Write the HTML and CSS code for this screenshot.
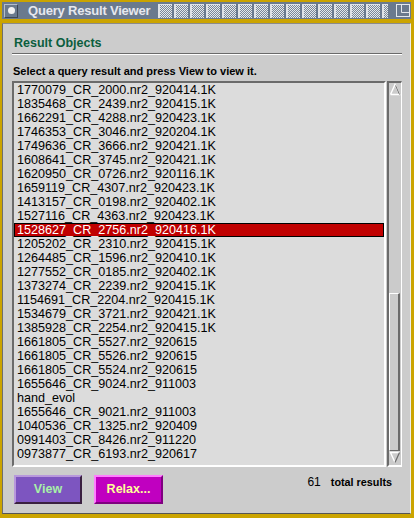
FILE: index.html
```html
<!DOCTYPE html>
<html>
<head>
<meta charset="utf-8">
<link rel="stylesheet" href="styles.css">
</head>
<body>
<div class="window">
  <div class="titlebar">
    <span class="ticon"><span class="dot"></span></span>
    <span class="ttext">Query Result Viewer</span>
    <svg class="stipple" width="230" height="14" viewBox="0 0 230 14">
      <defs>
        <pattern id="ck" width="2" height="2" patternUnits="userSpaceOnUse">
          <rect width="2" height="2" fill="#7a8898"/>
          <rect width="1" height="1" fill="#e4e8ec"/>
          <rect x="1" y="1" width="1" height="1" fill="#e4e8ec"/>
        </pattern>
        <pattern id="blk" width="16" height="14" patternUnits="userSpaceOnUse">
          <rect width="16" height="14" fill="#6a7a8e"/>
          <rect x="0" y="0" width="2" height="14" fill="#dfe3e8"/>
          <rect x="0" y="0" width="14" height="1" fill="#dfe3e8"/>
          <rect x="2" y="1" width="12" height="13" fill="url(#ck)"/>
        </pattern>
      </defs>
      <rect width="230" height="14" fill="url(#blk)"/>
    </svg>
    <svg class="maxi" width="14" height="13" viewBox="0 0 14 13">
      <rect x="0.5" y="0.5" width="13" height="12" fill="none" stroke="#e4e8ec"/>
      <path d="M5.5 0.5 V8.5 H13.5" fill="none" stroke="#e4e8ec"/>
    </svg>
  </div>
  <div class="content">
    <div class="heading">Result Objects</div>
    <div class="rule"></div>
    <div class="prompt">Select a query result and press View to view it.</div>
    <div class="listwrap">
      <div class="list">
        <div class="row">1770079_CR_2000.nr2_920414.1K</div>
        <div class="row">1835468_CR_2439.nr2_920415.1K</div>
        <div class="row">1662291_CR_4288.nr2_920423.1K</div>
        <div class="row">1746353_CR_3046.nr2_920204.1K</div>
        <div class="row">1749636_CR_3666.nr2_920421.1K</div>
        <div class="row">1608641_CR_3745.nr2_920421.1K</div>
        <div class="row">1620950_CR_0726.nr2_920116.1K</div>
        <div class="row">1659119_CR_4307.nr2_920423.1K</div>
        <div class="row">1413157_CR_0198.nr2_920402.1K</div>
        <div class="row">1527116_CR_4363.nr2_920423.1K</div>
        <div class="row selected">1528627_CR_2756.nr2_920416.1K</div>
        <div class="row">1205202_CR_2310.nr2_920415.1K</div>
        <div class="row">1264485_CR_1596.nr2_920410.1K</div>
        <div class="row">1277552_CR_0185.nr2_920402.1K</div>
        <div class="row">1373274_CR_2239.nr2_920415.1K</div>
        <div class="row">1154691_CR_2204.nr2_920415.1K</div>
        <div class="row">1534679_CR_3721.nr2_920421.1K</div>
        <div class="row">1385928_CR_2254.nr2_920415.1K</div>
        <div class="row">1661805_CR_5527.nr2_920615</div>
        <div class="row">1661805_CR_5526.nr2_920615</div>
        <div class="row">1661805_CR_5524.nr2_920615</div>
        <div class="row">1655646_CR_9024.nr2_911003</div>
        <div class="row">hand_evol</div>
        <div class="row">1655646_CR_9021.nr2_911003</div>
        <div class="row">1040536_CR_1325.nr2_920409</div>
        <div class="row">0991403_CR_8426.nr2_911220</div>
        <div class="row">0973877_CR_6193.nr2_920617</div>
      </div>
      <div class="scrollbar">
        <svg class="arrow" width="12" height="13" viewBox="0 0 12 13">
          <path d="M6 1 L10.5 11 H1.5 Z" fill="#cbcbcb"/>
          <path d="M1.5 11.5 L6 1.5 L10.5 11.5 H1.5" stroke="#ffffff" stroke-width="1.4" fill="none"/>
          <path d="M6.5 2.5 L10.5 11.5" stroke="#6b6b6b" stroke-width="1" fill="none"/>
        </svg>
        <div class="trough">
          <div class="thumb"></div>
        </div>
        <svg class="arrow" width="12" height="13" viewBox="0 0 12 13">
          <path d="M1.5 1.5 H10.5 L6 11.5 Z" fill="#cbcbcb"/>
          <path d="M10.5 1.5 H1.5 L6 11.5" stroke="#ffffff" stroke-width="1.4" fill="none"/>
          <path d="M6 11.5 L10.5 1.5" stroke="#6b6b6b" stroke-width="1.2" fill="none"/>
        </svg>
      </div>
    </div>
    <div class="footer">
      <button class="btn btn-view">View</button>
      <button class="btn btn-relax">Relax...</button>
      <div class="count"><span class="num">61</span><span class="lbl">total results</span></div>
    </div>
  </div>
</div>
</body>
</html>
```

FILE: styles.css
```css
html, body {
  margin: 0;
  padding: 0;
  background: #cba400;
}
body {
  width: 414px;
  height: 518px;
  overflow: hidden;
  font-family: "Liberation Sans", Arial, sans-serif;
}
.window {
  box-sizing: border-box;
  width: 414px;
  height: 518px;
  padding: 2px 3px 4px 2px;
  display: flex;
  flex-direction: column;
  background: #cba400;
}
.titlebar {
  height: 17px;
  flex: none;
  background: #6a7a8e;
  display: flex;
  align-items: center;
  margin-bottom: 4px;
}
.ticon {
  box-sizing: border-box;
  width: 14px;
  height: 14px;
  margin-left: 2px;
  border: 1px solid;
  border-color: #b4bdca #3e4756 #3e4756 #b4bdca;
  display: flex;
  align-items: center;
  justify-content: center;
}
.dot {
  width: 7px;
  height: 7px;
  border-radius: 50%;
  background: #f2f2f2;
}
.ttext {
  margin-left: 10px;
  color: #e6e8ee;
  font-weight: bold;
  font-size: 13px;
  letter-spacing: -0.2px;
  line-height: 17px;
  white-space: nowrap;
}
.stipple {
  display: block;
  margin-left: 8px;
}
.maxi {
  display: block;
  margin-left: 8px;
}
.content {
  flex: 1;
  background: #cccccc;
  border-top: 1px solid #8a8a8a;
  border-left: 1px solid #6e6e6e;
  border-right: 1px solid #eeeeee;
  border-bottom: 1px solid #555555;
  padding: 12px 8px 0 9px;
  display: flex;
  flex-direction: column;
}
.heading {
  margin-left: 2px;
  color: #0b5e3e;
  font-weight: bold;
  font-size: 12.5px;
  line-height: 15px;
}
.rule {
  margin-top: 2px;
  border-top: 1px solid #6a6a6a;
  border-bottom: 1px solid #ffffff;
}
.prompt {
  margin-top: 10px;
  margin-left: 1px;
  font-weight: bold;
  font-size: 11px;
  line-height: 13px;
  color: #000;
}
.listwrap {
  margin-top: 3px;
  height: 386px;
  display: flex;
}
.list {
  flex: 1;
  background: #dcdcdc;
  border-top: 2px solid #6b6b6b;
  border-left: 2px solid #6b6b6b;
  border-right: 2px solid #ffffff;
  border-bottom: 2px solid #ffffff;
  overflow: hidden;
}
.row {
  height: 14px;
  line-height: 14px;
  padding-left: 3px;
  font-size: 12.6px;
  color: #000;
  white-space: nowrap;
}
.row.selected {
  background: #c00000;
  color: #ffffff;
  box-shadow: inset 0 0 0 1px #000;
}
.scrollbar {
  box-sizing: border-box;
  width: 15px;
  margin-left: 1px;
  background: #cbcbcb;
  border-top: 2px solid #6b6b6b;
  border-left: 2px solid #6b6b6b;
  border-right: 1px solid #ffffff;
  border-bottom: 2px solid #ffffff;
  padding-bottom: 1px;
  display: flex;
  flex-direction: column;
}
.arrow {
  display: block;
  flex: none;
}
.trough {
  flex: 1;
  display: flex;
  flex-direction: column;
  justify-content: flex-end;
}
.thumb {
  box-sizing: border-box;
  width: 11px;
  height: 158px;
  background: #cbcbcb;
  border-top: 1px solid #ffffff;
  border-left: 1px solid #ffffff;
  border-right: 2px solid #6b6b6b;
  border-bottom: 1px solid #6b6b6b;
}
.footer {
  margin-top: 8px;
  display: flex;
  align-items: flex-start;
}
.btn {
  box-sizing: border-box;
  height: 29px;
  padding: 0;
  border: 2px solid;
  font-family: "Liberation Sans", Arial, sans-serif;
  font-weight: bold;
  font-size: 12.5px;
  line-height: 25px;
  text-align: center;
}
.btn-view {
  width: 68px;
  margin-left: 2px;
  background: #7d55c0;
  color: #a8f0a8;
  border-color: #b898dc #3a2040 #3a2040 #b898dc;
}
.btn-relax {
  width: 69px;
  margin-left: 12px;
  background: #c000c0;
  color: #ffff99;
  border-color: #ff80ff #800080 #800080 #ff80ff;
}
.count {
  margin-left: auto;
  margin-right: 10px;
  display: flex;
  align-items: baseline;
  gap: 10px;
  line-height: 14px;
  color: #000;
}
.num {
  font-size: 12px;
}
.lbl {
  font-weight: bold;
  font-size: 10.8px;
}
```
